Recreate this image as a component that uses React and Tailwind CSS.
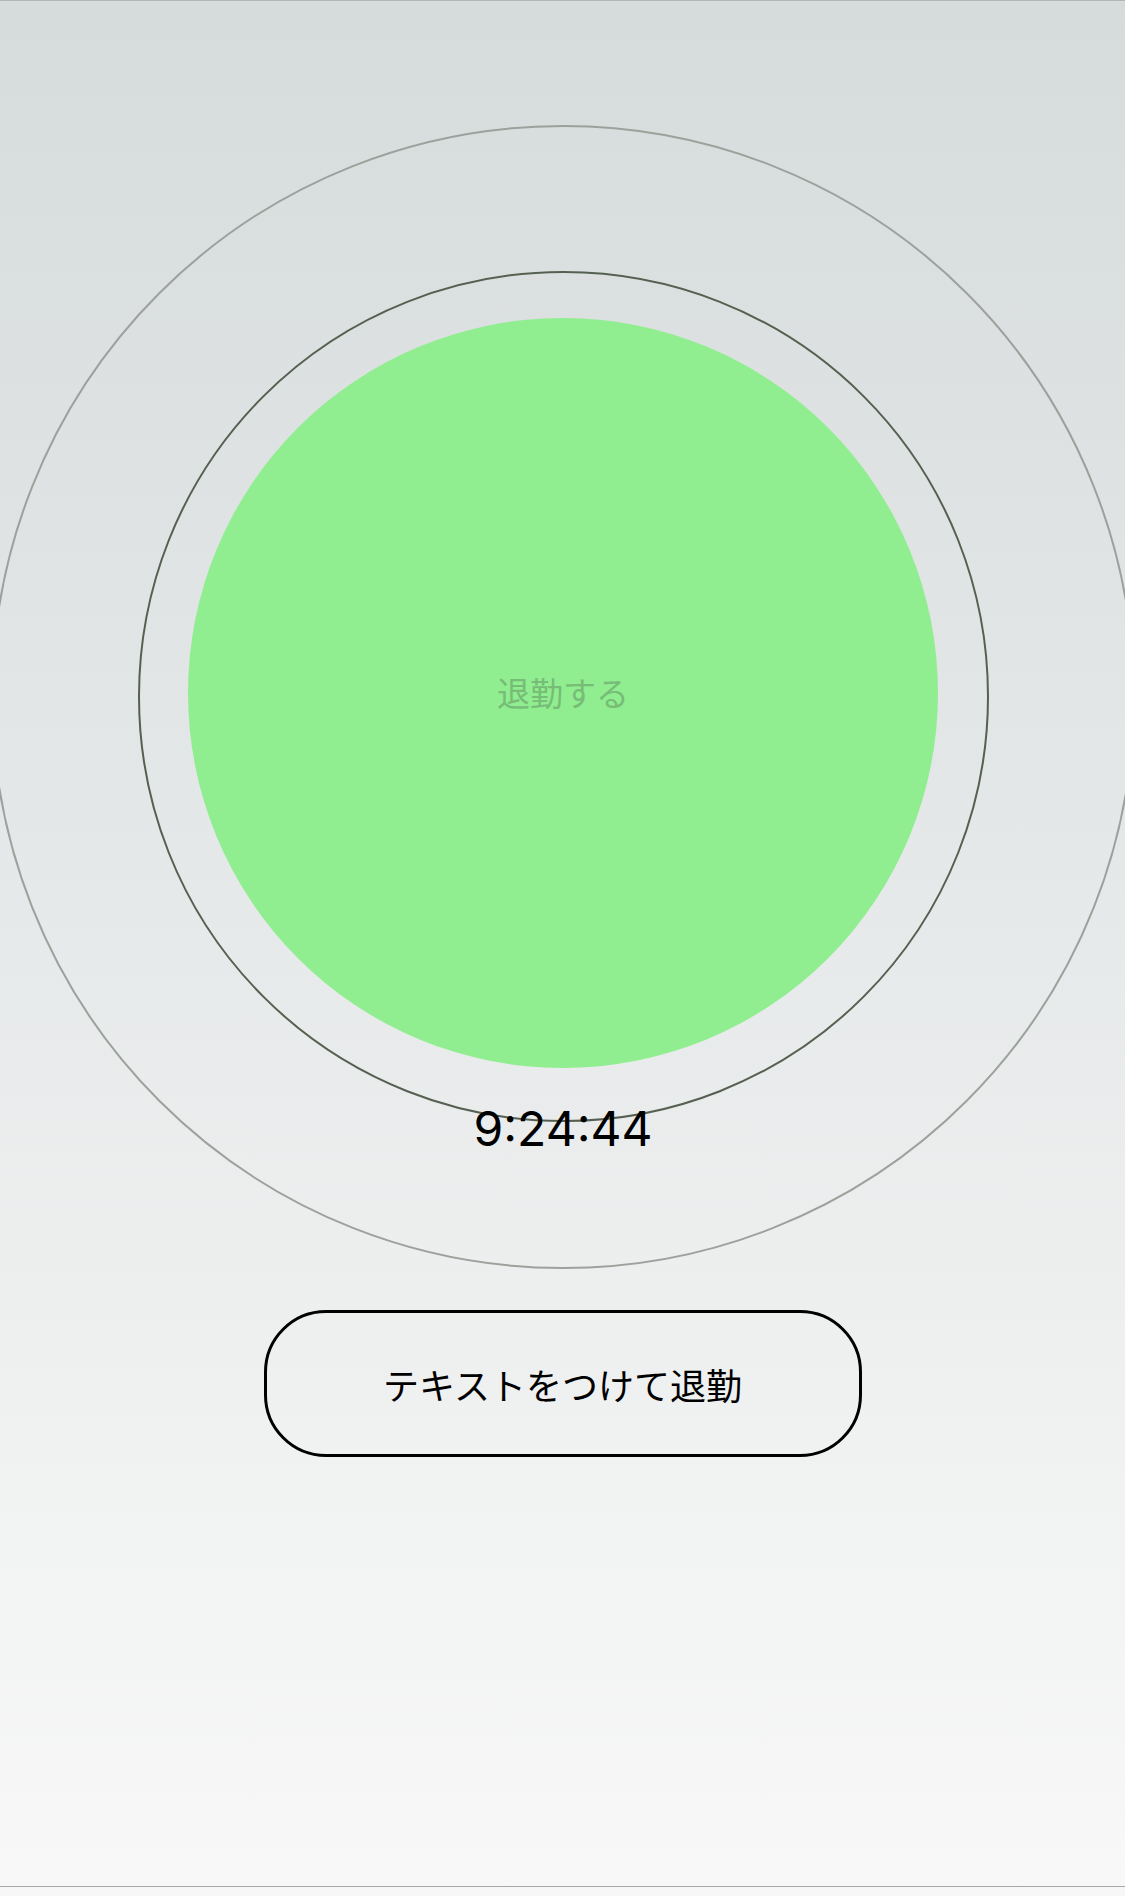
export default function App() {
  return (
    <div className="w-[1125px] h-[1896px] overflow-hidden flex flex-col bg-[#f7f7f7]" style={{ fontFamily: '"Noto Sans CJK JP", "Noto Sans", sans-serif' }}>
      <div className="h-[1886px] flex flex-col items-center border-t border-[#b3b6b9] bg-gradient-to-b from-[#d6dbdc] to-[#f8f8f8]">
        <div className="mt-[124px] w-[1144px] h-[1144px] shrink-0 rounded-full border-2 border-[#9da19c] flex flex-col items-center ml-[1px]">
          <div className="mt-[144px] w-[851px] h-[851px] shrink-0 rounded-full border-2 border-[#566051] flex flex-col items-center">
            <div className="mt-[45px] w-[750px] h-[750px] rounded-full bg-[#90ee90] flex items-center justify-center">
              <span className="text-[33px] leading-none text-[#77bd77] -mt-[2px]">退勤する</span>
            </div>
          </div>
          <div className="relative -mt-[17px] text-[48px] leading-[48px] text-black" style={{ fontFamily: 'Inter, "Liberation Sans", sans-serif' }}>
            9:24:44
          </div>
        </div>
        <button className="mt-[41px] w-[598px] h-[147px] shrink-0 rounded-[62px] border-[3px] border-black flex items-center justify-center text-[36px] leading-none text-black">
          テキストをつけて退勤
        </button>
      </div>
      <div className="border-t border-[#a8a8a8] flex-1 bg-[#f7f7f7]"></div>
    </div>
  );
}
